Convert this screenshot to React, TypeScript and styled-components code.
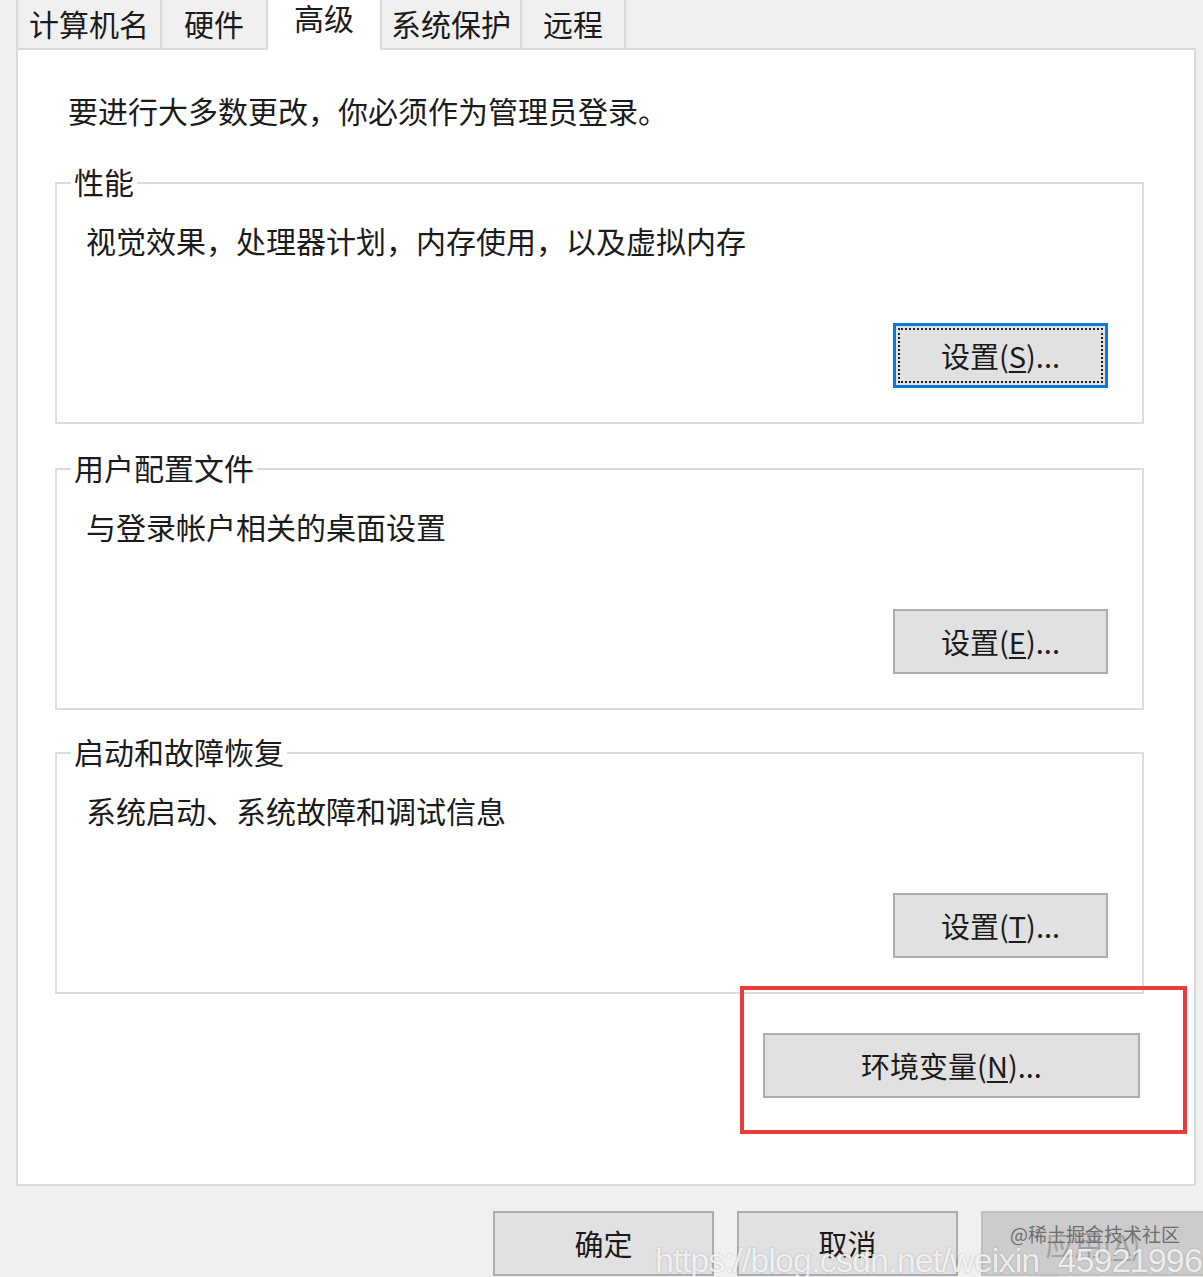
import React from "react";
import styled, { createGlobalStyle, css } from "styled-components";

const GlobalStyle = createGlobalStyle`
  html, body { margin: 0; padding: 0; background: #f0f0f0; }
  body { font-family: "Noto Sans CJK SC", "Microsoft YaHei", sans-serif; color: #1b1b1b; }
  * { box-sizing: border-box; }
`;

const Window = styled.div`
  position: relative;
  width: 1203px;
  height: 1277px;
  overflow: hidden;
  background: #f0f0f0;
  font-size: 30px;
`;

const TabRow = styled.div`
  position: relative;
  z-index: 2;
  display: flex;
  align-items: flex-end;
  height: 48px;
  padding-left: 18px;
`;

const Tab = styled.div<{ $w: number; $active?: boolean }>`
  width: ${(p) => p.$w}px;
  height: 58px;
  display: flex;
  align-items: center;
  justify-content: center;
  padding-top: 5px;
  background: #f0f0f0;
  border: 2px solid #d9d9d9;
  border-bottom: none;
  margin-left: -2px;
  line-height: 1;
  ${(p) =>
    p.$active &&
    css`
      height: 64px;
      margin-bottom: -2px;
      padding-top: 0;
      padding-bottom: 4px;
      background: #ffffff;
      border-color: #dcdcdc;
    `}
`;

const Panel = styled.div`
  position: relative;
  z-index: 1;
  margin-left: 16px;
  width: 1180px;
  height: 1138px;
  background: #ffffff;
  border: 2px solid #d9d9d9;
  padding-left: 37px;
  display: flex;
  flex-direction: column;
`;

const Notice = styled.div`
  margin-top: 42px;
  margin-left: 13px;
  line-height: 36px;
`;

const GroupBox = styled.section<{ $gap: number }>`
  position: relative;
  margin-top: ${(p) => p.$gap}px;
  width: 1089px;
  height: 242px;
  border: 2px solid #dcdcdc;
  padding: 39px 34px 34px 29px;
  display: flex;
  flex-direction: column;
`;

const Legend = styled.div`
  position: absolute;
  top: -20px;
  left: 14px;
  padding: 0 3px;
  height: 34px;
  line-height: 34px;
  background: #ffffff;
`;

const Desc = styled.div`
  line-height: 34px;
`;

const Button = styled.button<{ $w: number; $focused?: boolean; $disabled?: boolean }>`
  width: ${(p) => p.$w}px;
  height: 65px;
  flex: none;
  font-family: inherit;
  font-size: 29px;
  color: #1b1b1b;
  background: #e1e1e1;
  border: 2px solid #adadad;
  padding: 0 0 2px;
  display: flex;
  align-items: center;
  justify-content: center;
  ${(p) =>
    p.$focused &&
    css`
      border: 3px solid #0d78d6;
      outline: 2px dotted #222;
      outline-offset: -7px;
    `}
  ${(p) =>
    p.$disabled &&
    css`
      background: #cccccc;
      border-color: #bfbfbf;
      color: #a3a3a3;
    `}
`;

const GroupButton = styled(Button)`
  margin-top: auto;
  align-self: flex-end;
`;

const Key = styled.span`
  text-decoration: underline;
  text-underline-offset: 3px;
  text-decoration-thickness: 2px;
`;

const EnvRow = styled.div`
  display: flex;
  justify-content: flex-end;
  margin-top: 39px;
  margin-right: 54px;
`;

const Highlight = styled.div`
  position: absolute;
  left: 722px;
  top: 936px;
  width: 447px;
  height: 148px;
  border: 4px solid #ea3a3a;
  pointer-events: none;
`;

const Footer = styled.div`
  display: flex;
  gap: 23px;
  margin-top: 25px;
  padding-left: 493px;
`;

const SmallMark = styled.div`
  position: absolute;
  left: 1010px;
  top: 1222px;
  font-size: 19px;
  line-height: 24px;
  color: #6e6e6e;
  z-index: 3;
`;

const UrlMark = styled.div`
  position: absolute;
  left: 655px;
  top: 1240px;
  font-family: "Liberation Sans", Arial, sans-serif;
  font-size: 34px;
  line-height: 40px;
  letter-spacing: -0.85px;
  color: rgba(255, 255, 255, 0.82);
  text-shadow: 0 0 2px rgba(0, 0, 0, 0.25);
  white-space: nowrap;
  z-index: 3;
`;

const tabs = [
  { label: "计算机名", w: 146 },
  { label: "硬件", w: 108 },
  { label: "高级", w: 116, active: true },
  { label: "系统保护", w: 142 },
  { label: "远程", w: 106 },
];

const groups = [
  { title: "性能", desc: "视觉效果，处理器计划，内存使用，以及虚拟内存", key: "S", focused: true, gap: 54 },
  { title: "用户配置文件", desc: "与登录帐户相关的桌面设置", key: "E", gap: 44 },
  { title: "启动和故障恢复", desc: "系统启动、系统故障和调试信息", key: "T", gap: 42 },
];

export default function App() {
  return (
    <>
      <GlobalStyle />
      <Window>
        <TabRow>
          {tabs.map((t) => (
            <Tab key={t.label} $w={t.w} $active={t.active}>
              {t.label}
            </Tab>
          ))}
        </TabRow>
        <Panel>
          <Notice>要进行大多数更改，你必须作为管理员登录。</Notice>
          {groups.map((g) => (
            <GroupBox key={g.title} $gap={g.gap}>
              <Legend>{g.title}</Legend>
              <Desc>{g.desc}</Desc>
              <GroupButton $w={215} $focused={g.focused}>
                设置(<Key>{g.key}</Key>)...
              </GroupButton>
            </GroupBox>
          ))}
          <EnvRow>
            <Button $w={377}>
              环境变量(<Key>N</Key>)...
            </Button>
          </EnvRow>
          <Highlight />
        </Panel>
        <Footer>
          <Button $w={221}>确定</Button>
          <Button $w={221}>取消</Button>
          <Button $w={224} $disabled>
            应用(<Key>A</Key>)
          </Button>
        </Footer>
        <SmallMark>@稀土掘金技术社区</SmallMark>
        <UrlMark>https://blog.csdn.net/weixin_45921996</UrlMark>
      </Window>
    </>
  );
}
